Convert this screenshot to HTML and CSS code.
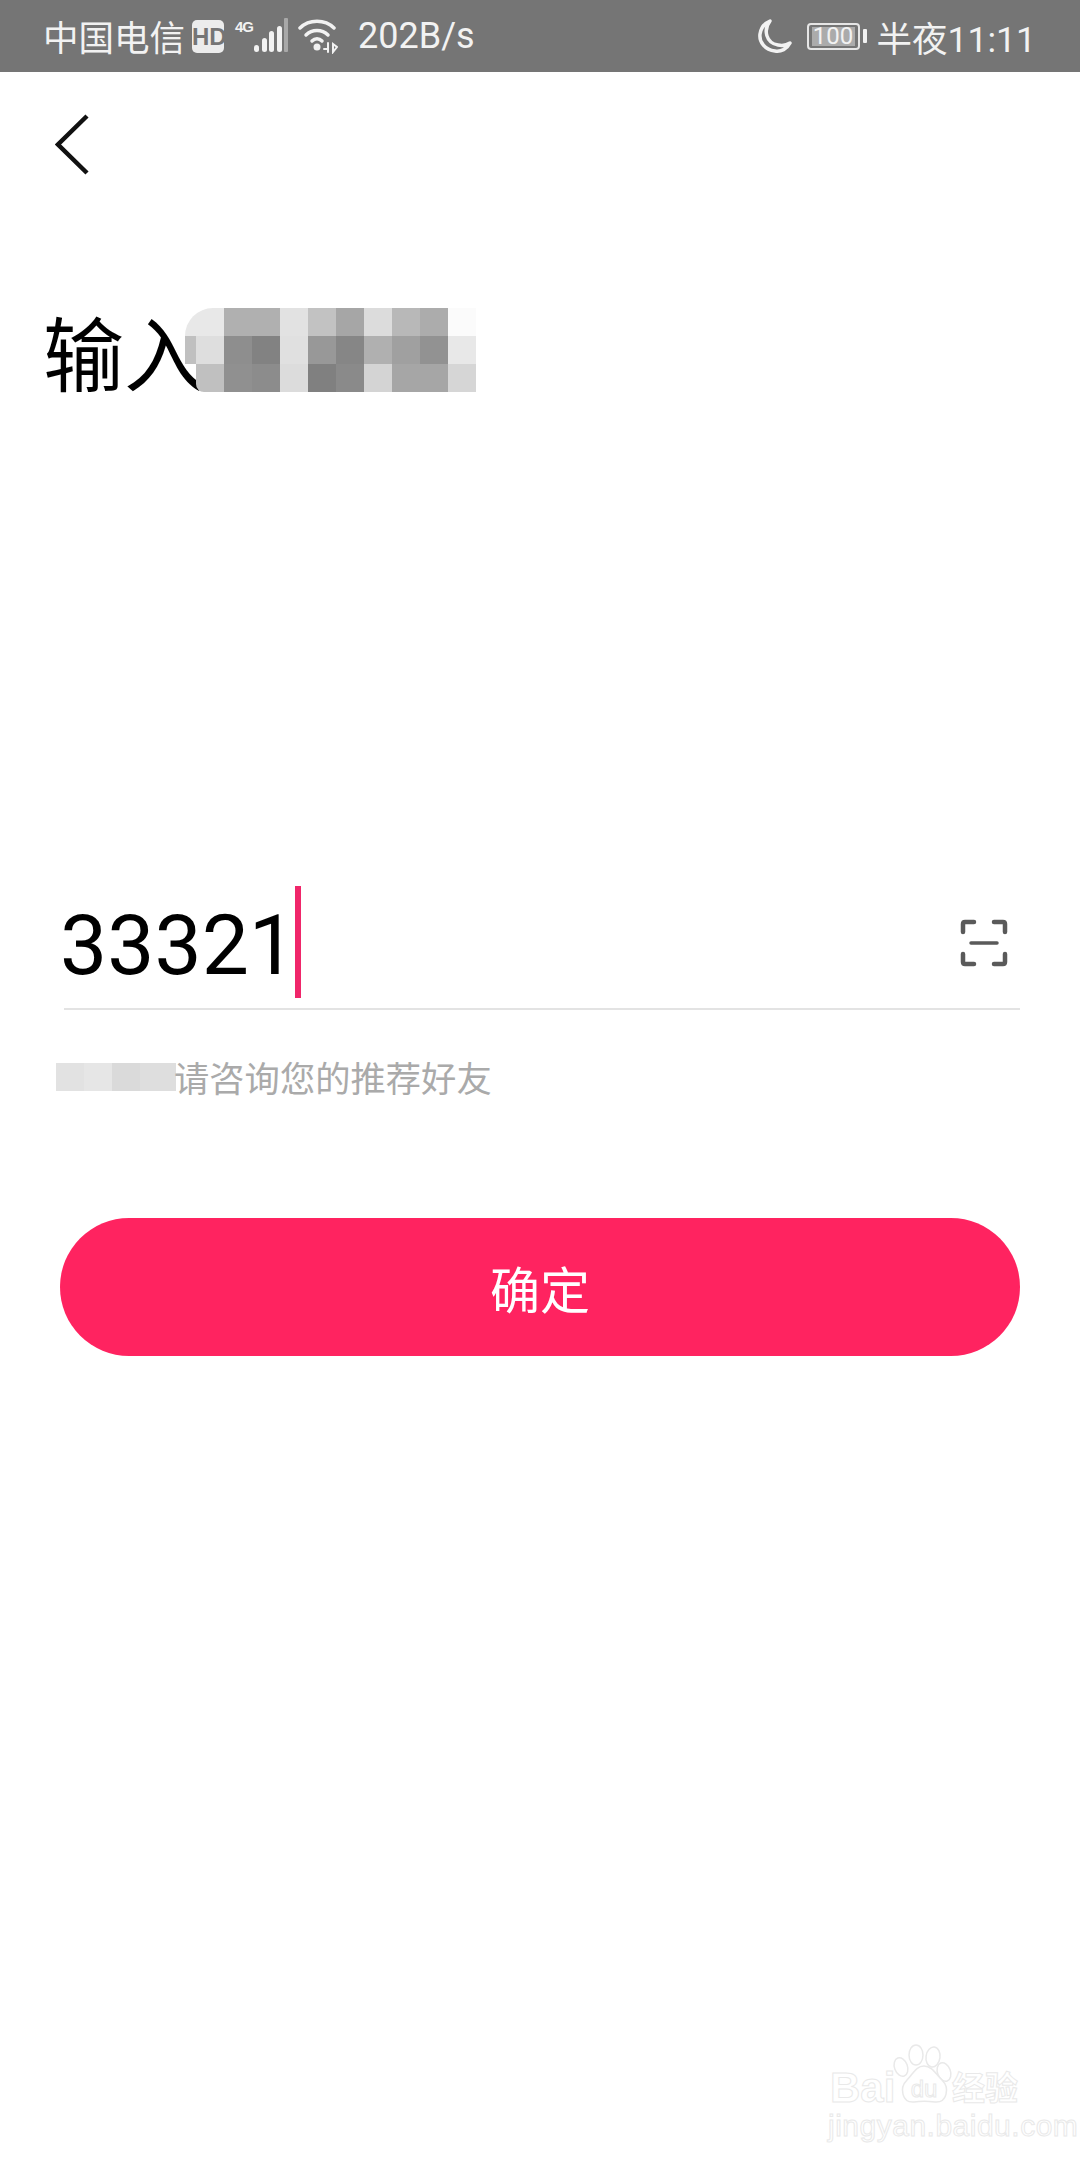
FILE: index.html
```html
<!DOCTYPE html>
<html lang="zh-CN">
<head>
    <meta charset="UTF-8">
    <meta name="viewport" content="width=device-width, initial-scale=1.0">
    <title>输入邀请码</title>
    <link rel="stylesheet" href="styles.css">
</head>
<body>
    <!-- Status Bar -->
    <div class="statusbar">
        <div class="status-left">
            <span class="carrier">中国电信</span>
            <span class="hd">HD</span>
            <span class="net">4G</span>
            <svg class="signal" width="36" height="36" viewBox="0 0 36 36">
                <rect x="1" y="27" width="5" height="7" rx="2.500" fill="#f2f2f2"/>
                <rect x="9" y="20" width="5" height="14" rx="2.500" fill="#f2f2f2"/>
                <rect x="16" y="13" width="5" height="21" rx="2.500" fill="#f2f2f2"/>
                <rect x="24" y="8" width="5" height="26" rx="2.500" fill="#f2f2f2"/>
                <rect x="31" y="0" width="4" height="34" rx="1" fill="#a8a8a8"/>
            </svg>
            <svg class="wifi" width="40" height="36" viewBox="0 0 40 36" fill="none" stroke="#f2f2f2" stroke-width="3.500" stroke-linecap="round">
                <path d="M2 10 C11 1 27 1 36 10"/>
                <path d="M8 17 C14 11 24 11 30 17"/>
                <path d="M14 23 C17 20 21 20 24 23"/>
                <circle cx="19" cy="29" r="3.500" fill="#f2f2f2" stroke="none"/>
                <path d="M30 25 L30 34 M26 31 L30 31 M35 26 L35 34 L39 29 Z" stroke-width="2"/>
            </svg>
            <span class="speed">202B/s</span>
        </div>
        <div class="status-right">
            <svg class="moon" width="34" height="34" viewBox="0 0 34 34" fill="none" stroke="#f2f2f2" stroke-width="3.500" stroke-linejoin="round">
                <path d="M12 2 C5 11 8 24 20 26 C25 27 29 26 32 24 C29 30 23 33 17 32 C7 31 1 23 2 15 C3 9 7 4 12 2 Z"/>
            </svg>
            <div class="battery">
                <div class="battery-body"><span class="battery-level">100</span></div>
                <div class="battery-tip"></div>
            </div>
            <span class="clock">半夜11:11</span>
        </div>
    </div>

    <!-- Back Button -->
    <div class="topbar">
        <svg width="34" height="61" viewBox="0 0 34 61" fill="none" stroke="#111" stroke-width="4.500">
            <path d="M32 2 L3 30.500 L32 59"/>
        </svg>
    </div>

    <!-- Title -->
    <div class="title-row">
        <h1>输入</h1>
        <div class="mosaic">
            <i class="blob-top s-e8"></i><i class="s-b0"></i><i class="s-b0"></i><i class="s-e2"></i><i class="s-c2"></i><i class="s-a6"></i><i class="s-dc"></i><i class="s-b8"></i><i class="s-ac"></i><i class="s-fb"></i>
            <i class="blob-mid"></i><i class="s-8e"></i><i class="s-82"></i><i class="s-e0"></i><i class="s-98"></i><i class="s-86"></i><i class="s-b0"></i><i class="s-a0"></i><i class="s-92"></i><i class="s-e8"></i>
            <i class="blob-bottom s-c0"></i><i class="s-90"></i><i class="s-8c"></i><i class="s-dc"></i><i class="s-80"></i><i class="s-8a"></i><i class="s-d4"></i><i class="s-a6"></i><i class="s-a6"></i><i class="s-d6"></i>
        </div>
    </div>

    <!-- Code Input -->
    <div class="code-field">
        <span class="code-value">33321</span>
        <span class="caret"></span>
        <svg class="scan" width="50" height="50" viewBox="0 0 50 50" fill="none" stroke="#5a5a5a" stroke-width="4.500" stroke-linecap="round" stroke-linejoin="round">
            <path d="M4 14 L4 6 Q4 4 6 4 L15 4"/>
            <path d="M35 4 L44 4 Q46 4 46 6 L46 14"/>
            <path d="M4 36 L4 44 Q4 46 6 46 L15 46"/>
            <path d="M46 36 L46 44 Q46 46 44 46 L35 46"/>
            <path d="M12 25 L38 25" stroke-width="3.500"/>
        </svg>
    </div>

    <div class="hint">
        <span class="hint-text">请咨询您的推荐好友</span><span class="hint-mosaic"></span>
    </div>

    <button class="confirm" type="button">确定</button>

    <!-- Watermark -->
    <div class="watermark">
        <span class="wm-bai">Bai</span>
        <svg class="wm-paw" viewBox="0 0 66 64" fill="#fff" stroke="#e9e9e9" stroke-width="1.500">
            <ellipse cx="11" cy="25" rx="6.500" ry="9.500" transform="rotate(-20 11 25)"/>
            <ellipse cx="26" cy="13" rx="7" ry="10"/>
            <ellipse cx="43" cy="15" rx="7" ry="10" transform="rotate(8 43 15)"/>
            <ellipse cx="54" cy="30" rx="6.500" ry="9.500" transform="rotate(-20 54 30)"/>
            <path d="M34 24 C42 24 46 32 52 38 C60 46 57 61 45 60 C38 59 30 59 24 60 C12 61 9 46 17 38 C23 32 26 24 34 24 Z"/>
            <text x="34" y="55" text-anchor="middle" class="wm-du">du</text>
        </svg>
        <span class="wm-cn">经验</span>
        <div class="wm-url">jingyan.baidu.com</div>
    </div>
</body>
</html>
```

FILE: styles.css
```css
body {
    font-family: 'Noto Sans CJK SC', sans-serif;
    margin: 0;
    padding: 0;
    width: 1080px;
    height: 2160px;
    position: relative;
    overflow: hidden;
    background-color: #fff;
    color: #000;
}

/* status bar */
.statusbar {
    height: 72px;
    background-color: #757575;
    color: #f2f2f2;
    font-size: 34px;
    display: flex;
    justify-content: space-between;
    align-items: center;
    padding: 0 44px 0 43px;
}
.status-left, .status-right {
    display: flex;
    align-items: center;
}
.carrier {
    font-size: 35.500px;
    line-height: 72px;
}
.hd {
    font-family: 'Liberation Sans', sans-serif;
    font-weight: bold;
    font-size: 24px;
    line-height: 33px;
    width: 32px;
    text-align: center;
    margin-left: 7px;
    border-radius: 5px;
    background-color: #ececec;
    color: #757575;
}
.net {
    font-family: 'Liberation Sans', sans-serif;
    font-weight: bold;
    font-size: 15px;
    line-height: 16px;
    letter-spacing: -1px;
    margin: -18px 0 0 11px;
}
.wifi {
    margin-left: 9px;
}
.speed {
    font-family: 'Roboto', sans-serif;
    font-size: 36px;
    margin-left: 20px;
}
.battery {
    display: flex;
    align-items: center;
    margin-left: 15px;
}
.battery-body {
    width: 53px;
    height: 27px;
    border: 2px solid #e6e6e6;
    border-radius: 4px;
    box-sizing: border-box;
    padding: 2px 3px;
}
.battery-level {
    display: block;
    height: 19px;
    background-color: #ababab;
    font-family: 'Roboto', sans-serif;
    font-size: 24px;
    line-height: 19px;
    text-align: center;
    color: #f2f2f2;
}
.battery-tip {
    width: 4px;
    height: 14px;
    margin-left: 3px;
    background-color: #f2f2f2;
    border-radius: 1px;
}
.clock {
    font-family: 'Roboto', 'Noto Sans CJK SC', sans-serif;
    font-size: 35.500px;
    margin-left: 10px;
}

/* back button */
.topbar {
    padding: 42px 0 0 55px;
    height: 61px;
}

/* title */
.title-row {
    display: flex;
    margin-top: 133px;
    padding-left: 43px;
}
h1 {
    font-size: 81px;
    font-weight: normal;
    line-height: 84px;
    margin: 0;
    color: #000;
}
.mosaic {
    display: grid;
    grid-template-columns: 39px repeat(9, 28px);
    grid-auto-rows: 28px;
    margin-left: -20px;
}
.mosaic i {
    display: block;
}
.blob-top {
    border-top-left-radius: 30px;
}
.blob-mid {
    background: linear-gradient(to right, #c0c0c0 11px, #dedede 11px);
}
.blob-bottom {
    margin-left: 11px;
    border-bottom-left-radius: 8px;
}
.s-e8 { background-color: #e8e8e8; }
.s-b0 { background-color: #b0b0b0; }
.s-e2 { background-color: #e2e2e2; }
.s-c2 { background-color: #c2c2c2; }
.s-a6 { background-color: #a6a6a6; }
.s-dc { background-color: #dcdcdc; }
.s-b8 { background-color: #b8b8b8; }
.s-ac { background-color: #acacac; }
.s-fb { background-color: #fbfbfb; }
.s-8e { background-color: #8e8e8e; }
.s-82 { background-color: #828282; }
.s-e0 { background-color: #e0e0e0; }
.s-98 { background-color: #989898; }
.s-86 { background-color: #868686; }
.s-a0 { background-color: #a0a0a0; }
.s-92 { background-color: #929292; }
.s-c0 { background-color: #c0c0c0; }
.s-90 { background-color: #909090; }
.s-8c { background-color: #8c8c8c; }
.s-80 { background-color: #808080; }
.s-8a { background-color: #8a8a8a; }
.s-d4 { background-color: #d4d4d4; }
.s-d6 { background-color: #d6d6d6; }

/* code input */
.code-field {
    display: flex;
    align-items: flex-start;
    margin: 494px 60px 0 64px;
    height: 122px;
    border-bottom: 2px solid #e3e3e3;
}
.code-value {
    font-family: 'Roboto', sans-serif;
    font-size: 84px;
    line-height: 112px;
    margin: 4px 0 0 -4px;
    height: 112px;
}
.caret {
    width: 6px;
    height: 112px;
    margin: 0 0 0 -1px;
    background-color: #f0266a;
}
.scan {
    margin: 32px 11px 0 auto;
}

/* hint text starts under the mosaic, which hides the first stroke */
.hint {
    display: flex;
    flex-direction: row-reverse;
    justify-content: flex-end;
    align-items: center;
    margin: 49px 0 0 56px;
    height: 36px;
}
.hint-mosaic {
    width: 120px;
    height: 28px;
    background: linear-gradient(to right, #e2e2e2 28px, #e6e6e6 28px, #e6e6e6 56px, #dadada 56px, #dadada 84px, #dedede 84px);
}
.hint-text {
    font-size: 35.300px;
    line-height: 36px;
    color: #aaa;
    margin-left: -2px;
}

/* confirm button */
.confirm {
    display: block;
    width: 960px;
    height: 138px;
    margin: 123px 0 0 60px;
    border: none;
    border-radius: 69px;
    background-color: #ff2360;
    color: #fff;
    font-family: 'Noto Sans CJK SC', sans-serif;
    font-size: 50px;
}

/* watermark sits over the page corner */
.watermark {
    position: absolute;
    left: 828px;
    top: 2042px;
    width: 200px;
    height: 98px;
    color: #fff;
}
.wm-bai, .wm-cn, .wm-url {
    -webkit-text-stroke: 1px #e9e9e9;
}
.wm-bai {
    position: absolute;
    left: 2px;
    top: 24px;
    font-family: 'Liberation Sans', sans-serif;
    font-weight: bold;
    font-size: 42px;
    line-height: 44px;
}
.wm-paw {
    position: absolute;
    left: 62px;
    top: 0;
    width: 66px;
    height: 64px;
}
.wm-du {
    font-family: 'Liberation Sans', sans-serif;
    font-size: 24px;
    stroke-width: 1px;
}
.wm-cn {
    position: absolute;
    left: 124px;
    top: 29px;
    font-family: 'Liberation Sans', 'Noto Sans CJK SC', sans-serif;
    font-size: 33px;
    line-height: 36px;
    font-weight: bold;
}
.wm-url {
    position: absolute;
    left: 0;
    top: 68px;
    font-family: 'Liberation Sans', sans-serif;
    font-size: 30px;
    line-height: 32px;
    white-space: nowrap;
    letter-spacing: 0.500px;
}
```
